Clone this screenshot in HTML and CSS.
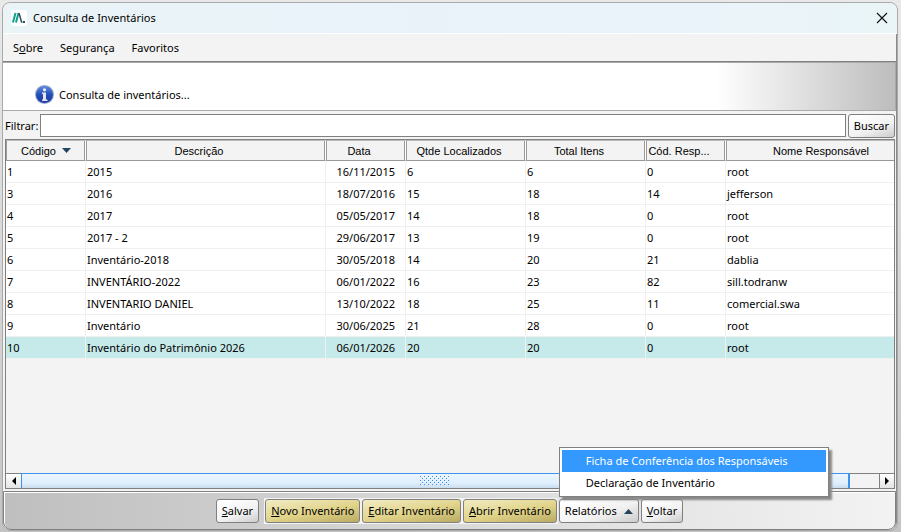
FILE: index.html
```html
<!DOCTYPE html>
<html lang="pt-BR">
<head>
<meta charset="utf-8">
<title>Consulta de Inventários</title>
<link rel="stylesheet" href="styles.css">
</head>
<body>
<main class="window">
  <header class="titlebar">
    <svg class="app-icon" width="16" height="16" viewBox="0 0 16 16" aria-hidden="true">
      <rect width="16" height="16" rx="3" fill="#fff"/>
      <path d="M2 12.500 4.500 3M5 12.500 7.500 3" stroke="#12a08c" stroke-width="2" fill="none"/>
      <path d="M8 3 10.500 12H11.500" stroke="#34505c" stroke-width="1.500" fill="none"/>
      <rect x="12" y="11" width="2" height="2" fill="#34505c"/>
    </svg>
    <h1 class="title">Consulta de Inventários</h1>
    <button class="close" type="button" aria-label="Fechar">
      <svg width="12" height="12" viewBox="0 0 12 12"><path d="M1 1 11 11M11 1 1 11" stroke="#111" stroke-width="1.200"/></svg>
    </button>
  </header>
  <div class="content">
    <nav class="menubar">
      <a href="#sobre">S<u>o</u>bre</a>
      <a href="#seguranca">Segurança</a>
      <a href="#favoritos">Favoritos</a>
    </nav>
    <section class="banner">
      <svg width="20" height="20" viewBox="0 0 20 20" aria-hidden="true">
        <defs>
          <linearGradient id="ball" x1="0" y1="0" x2="0" y2="1">
            <stop offset="0" stop-color="#5f8be0"/><stop offset=".5" stop-color="#2450b8"/><stop offset="1" stop-color="#1a37a4"/>
          </linearGradient>
        </defs>
        <circle cx="9.500" cy="9.500" r="9.500" fill="#98a6c8"/>
        <circle cx="9.500" cy="9.500" r="8.500" fill="url(#ball)"/>
        <circle cx="9.500" cy="4.800" r="1.600" fill="#eef0f4"/>
        <path d="M7 7.500H11V14.500H12.500V16H7V14.500H8V9H7Z" fill="#e4e6ea"/>
      </svg>
      <p>Consulta de inventários...</p>
    </section>
    <form class="filter">
      <label for="filtro">Filtrar:</label>
      <input id="filtro" type="text">
      <button class="btn" type="button">Buscar</button>
    </form>
    <section class="list">
      <div class="viewport">
        <table>
          <colgroup>
            <col class="c-short"><col class="c-long"><col class="c-short"><col class="c-mid"><col class="c-mid"><col class="c-short"><col class="c-name">
          </colgroup>
          <thead>
            <tr>
              <th class="sorted">Código <svg class="sort" width="9" height="5" viewBox="0 0 9 5"><path d="M0 0H9L4.500 5Z" fill="#24465c"/></svg></th>
              <th>Descrição</th><th>Data</th><th>Qtde Localizados</th><th>Total Itens</th><th>Cód. Resp...</th><th>Nome Responsável</th>
            </tr>
          </thead>
          <tbody>
            <tr><td>1</td><td>2015</td><td class="date">16/11/2015</td><td>6</td><td>6</td><td>0</td><td>root</td></tr>
            <tr><td>3</td><td>2016</td><td class="date">18/07/2016</td><td>15</td><td>18</td><td>14</td><td>jefferson</td></tr>
            <tr><td>4</td><td>2017</td><td class="date">05/05/2017</td><td>14</td><td>18</td><td>0</td><td>root</td></tr>
            <tr><td>5</td><td>2017 - 2</td><td class="date">29/06/2017</td><td>13</td><td>19</td><td>0</td><td>root</td></tr>
            <tr><td>6</td><td>Inventário-2018</td><td class="date">30/05/2018</td><td>14</td><td>20</td><td>21</td><td>dablia</td></tr>
            <tr><td>7</td><td>INVENTÁRIO-2022</td><td class="date">06/01/2022</td><td>16</td><td>23</td><td>82</td><td>sill.todranw</td></tr>
            <tr><td>8</td><td>INVENTARIO DANIEL</td><td class="date">13/10/2022</td><td>18</td><td>25</td><td>11</td><td>comercial.swa</td></tr>
            <tr><td>9</td><td>Inventário</td><td class="date">30/06/2025</td><td>21</td><td>28</td><td>0</td><td>root</td></tr>
            <tr class="selected"><td>10</td><td>Inventário do Patrimônio 2026</td><td class="date">06/01/2026</td><td>20</td><td>20</td><td>0</td><td>root</td></tr>
          </tbody>
        </table>
      </div>
      <div class="scrollbar">
        <button type="button" aria-label="Rolar para a esquerda"><svg width="4" height="8" viewBox="0 0 4 8"><path d="M4 0V8L0 4Z"/></svg></button>
        <div class="track"><div class="thumb"><svg width="30" height="10" aria-hidden="true">
          <defs><pattern id="dots" width="4" height="4" patternUnits="userSpaceOnUse"><path d="M0 0h1v1H0zM2 2h1v1H2z" fill="#3d8ae0"/></pattern></defs>
          <rect width="30" height="10" fill="url(#dots)"/></svg></div></div>
        <button type="button" aria-label="Rolar para a direita"><svg width="4" height="8" viewBox="0 0 4 8"><path d="M0 0V8L4 4Z"/></svg></button>
      </div>
    </section>
    <footer class="actions">
      <button class="btn" type="button"><u>S</u>alvar</button>
      <div class="group">
        <button class="btn gold" type="button"><u>N</u>ovo Inventário</button>
        <button class="btn gold" type="button"><u>E</u>ditar Inventário</button>
        <button class="btn gold" type="button"><u>A</u>brir Inventário</button>
      </div>
      <div class="dropdown">
        <button class="btn" type="button" aria-haspopup="menu" aria-expanded="true">Relatórios <svg width="9" height="5" viewBox="0 0 9 5"><path d="M0 5H9L4.500 0Z" fill="#24465c"/></svg></button>
        <div class="popup" role="menu">
          <button type="button" role="menuitem" class="active">Ficha de Conferência dos Responsáveis</button>
          <button type="button" role="menuitem">Declaração de Inventário</button>
        </div>
      </div>
      <button class="btn" type="button"><u>V</u>oltar</button>
    </footer>
  </div>
</main>
</body>
</html>
```
FILE: styles.css
```css
* { box-sizing: border-box; }

body {
  margin: 0;
  height: 100vh;
  padding: 2px 3px 1px 2px;
  display: flex;
  background: linear-gradient(#e9e9e9, #c4c4c4);
  font: 11px/16px "Noto Sans", "Open Sans", sans-serif;
  color: #000;
  overflow: hidden;
}

h1, p { margin: 0; font: inherit; }
button, input { font: inherit; color: inherit; }
u { text-underline-offset: 1px; }

.window {
  flex: 1;
  min-width: 0;
  display: flex;
  flex-direction: column;
  border: 1px solid #aaa;
  border-radius: 8px;
  background: #f3f3f3;
}

.titlebar {
  height: 31px;
  flex: none;
  display: flex;
  align-items: center;
  gap: 6px;
  padding: 0 7px 0 8px;
  border-bottom: 1px solid #fff;
  border-radius: 8px 8px 0 0;
  background: linear-gradient(90deg, #eaf4f7, #eaf2fa 60%, #eaf5f8);
}
.title { flex: 1; }
.close {
  display: flex;
  padding: 2px;
  border: 0;
  background: none;
}

.content {
  flex: 1;
  min-height: 0;
  display: flex;
  flex-direction: column;
  border-right: 1px solid #8a8a8a;
  border-radius: 0 0 8px 8px;
}

.menubar {
  height: 28px;
  flex: none;
  display: flex;
  align-items: center;
  gap: 17px;
  padding: 0 10px;
  border-bottom: 1px solid #808080;
}
.menubar a { color: inherit; text-decoration: none; }

.banner {
  height: 49px;
  flex: none;
  display: flex;
  align-items: flex-end;
  gap: 4px;
  padding: 0 32px 5px;
  border: 1px solid #aaa;
  border-left-width: 0;
  background: linear-gradient(90deg, #fff 80%, #bdbdbd);
}
.banner p { padding-bottom: 2px; }

.filter {
  height: 28px;
  flex: none;
  display: flex;
  align-items: center;
  gap: 2px;
  padding: 1px 1px 0 2px;
}
.filter input {
  flex: 1;
  min-width: 0;
  height: 23px;
  border: 1px solid #808080;
  background: #fff;
}

.btn {
  height: 24px;
  padding: 0 5px;
  border: 1px solid #808080;
  border-radius: 3px;
  background: linear-gradient(160deg, #fff 10%, #f1f1f1 60%, #ccc);
  white-space: nowrap;
}
.btn.gold { background: linear-gradient(170deg, #f2ecc4, #e0d388 55%, #b9ab62); }
.btn svg { margin: 0 0 1px 4px; }

.list {
  flex: 1;
  min-height: 0;
  display: flex;
  flex-direction: column;
  margin: 0 1px 2px 2px;
  border: 1px solid #808080;
}
.viewport { flex: 1; min-height: 0; overflow: hidden; }

table {
  width: 924px;
  table-layout: fixed;
  border-collapse: separate;
  border-spacing: 0;
}
.c-short { width: 80px; }
.c-mid { width: 120px; }
.c-long { width: 240px; }
.c-name { width: 204px; }

th {
  height: 21px;
  padding: 0 14px 0 0;
  border: 1px solid #999;
  border-top-color: #bbb;
  border-right-color: #fff;
  box-shadow: inset -1px 0 #999;
  font: 11px/16px "Liberation Sans", sans-serif;
  white-space: nowrap;
}
th.sorted { padding: 0; }
.sort { margin: 0 0 2px 3px; }

td {
  height: 22px;
  padding: 0 1px;
  border-right: 1px solid #f0f0f0;
  border-bottom: 1px solid #f0f0f0;
  background: #fff;
  white-space: nowrap;
}
.date { text-align: right; padding-right: 10px; }
.selected td { background: #c6eaea; }

.scrollbar {
  height: 15px;
  flex: none;
  display: flex;
}
.scrollbar button {
  width: 15px;
  display: flex;
  align-items: center;
  justify-content: center;
  padding: 0;
  border: 0;
  border-top: 1px solid #808080;
  background: linear-gradient(#fff, #e4e4e4);
}
.scrollbar button:last-child { border-left: 1px solid #808080; }
.track {
  flex: 1;
  display: flex;
  border-top: 1px solid #808080;
}
.thumb {
  flex: 1;
  display: flex;
  align-items: center;
  justify-content: center;
  margin: -1px 29px 0 0;
  border: 1px solid #3d94ee;
  border-right-width: 2px;
  border-bottom: 0;
  background: linear-gradient(#edf6ff, #ddeefd 70%, #c9dcec);
}

.actions {
  height: 39px;
  flex: none;
  display: flex;
  align-items: center;
  justify-content: center;
  gap: 1px;
  border: 1px solid #808080;
  border-radius: 0 0 8px 8px;
  box-shadow: inset 1px 1px #fff;
  background: linear-gradient(90deg, #bfbfbf, #f3f3f3);
}
.group {
  display: flex;
  gap: 2px;
  margin-left: 4px;
  padding: 1px;
  background: #f3f3f3;
}
.dropdown { position: relative; margin-right: 1px; }

.popup {
  position: absolute;
  left: 0;
  bottom: calc(100% + 2px);
  width: 270px;
  padding: 2px;
  border: 1px solid #808080;
  background: #fff;
  box-shadow: 3px 3px 2px #888;
}
.popup button {
  display: block;
  width: 100%;
  height: 22px;
  padding: 0 24px;
  border: 0;
  background: none;
  text-align: left;
  white-space: nowrap;
}
.popup .active { background: #3399ff; color: #fff; }
```
